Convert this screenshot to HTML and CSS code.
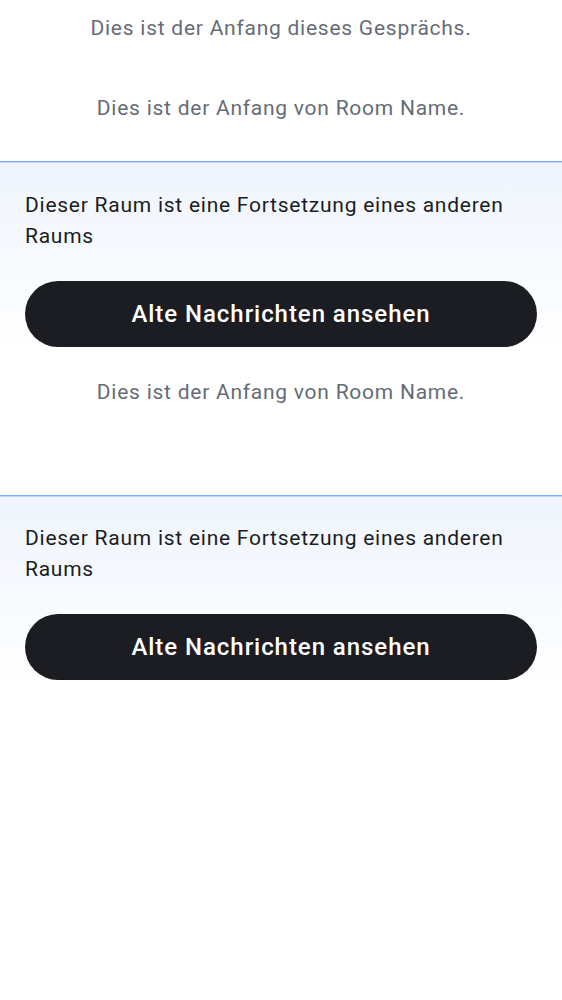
FILE: index.html
```html
<!DOCTYPE html>
<html lang="de">
<head>
<meta charset="utf-8">
<link rel="stylesheet" href="styles.css">
</head>
<body>
<div class="timeline">
  <p class="notice first">Dies ist der Anfang dieses Gesprächs.</p>
  <p class="notice second">Dies ist der Anfang von Room Name.</p>
  <section class="tombstone">
    <p class="tomb-text">Dieser Raum ist eine Fortsetzung eines anderen Raums</p>
    <button class="tomb-btn">Alte Nachrichten ansehen</button>
  </section>
  <p class="notice after">Dies ist der Anfang von Room Name.</p>
  <section class="tombstone spaced">
    <p class="tomb-text">Dieser Raum ist eine Fortsetzung eines anderen Raums</p>
    <button class="tomb-btn">Alte Nachrichten ansehen</button>
  </section>
</div>
</body>
</html>
```

FILE: styles.css
```css
html, body {
  margin: 0;
  padding: 0;
  background: #ffffff;
}
body {
  font-family: Roboto, "Noto Sans", sans-serif;
}
.timeline {
  display: flex;
  flex-direction: column;
}
.notice {
  margin: 0;
  text-align: center;
  font-size: 21px;
  line-height: 30px;
  color: #656c76;
  letter-spacing: 0.75px;
}
.notice.first {
  margin-top: 13px;
}
.notice.second {
  margin-top: 50px;
}
.tombstone {
  margin-top: 38px;
  border-top: 1px solid #78acfa;
  box-shadow: inset 0 1px 0 #c2dafd;
  background: linear-gradient(to bottom, #eff4fd 0%, #ffffff 100%);
  padding: 28px 25px 6px;
  display: flex;
  flex-direction: column;
}
.tombstone.spaced {
  margin-top: 88px;
  padding-top: 27px;
}
.tomb-text {
  margin: 0;
  font-size: 21px;
  line-height: 31px;
  color: #1b1d22;
  letter-spacing: 0.75px;
}
.tomb-btn {
  margin-top: 29px;
  height: 66px;
  border: none;
  border-radius: 33px;
  background: #1b1d22;
  color: #ffffff;
  font-family: Roboto, "Noto Sans", sans-serif;
  font-size: 24px;
  font-weight: 500;
  letter-spacing: 0.95px;
  cursor: pointer;
}
.notice.after {
  margin-top: 24px;
}
```
